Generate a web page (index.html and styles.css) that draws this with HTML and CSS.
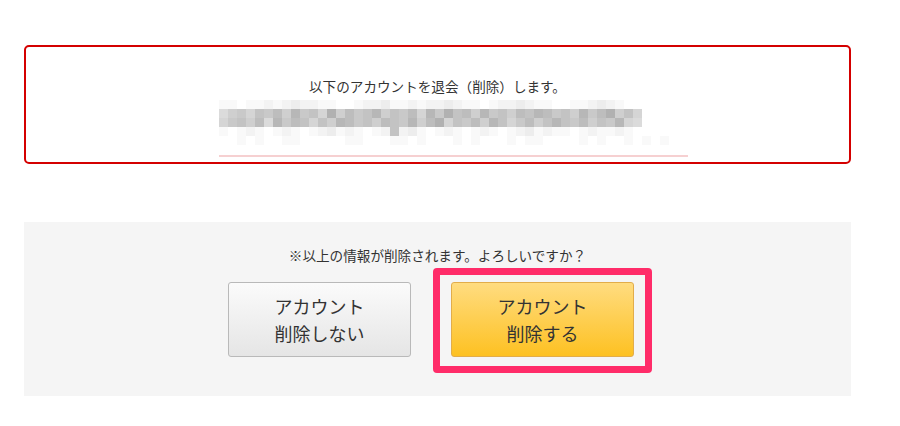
FILE: index.html
```html
<!DOCTYPE html>
<html lang="ja">
<head>
    <meta charset="UTF-8">
    <meta name="viewport" content="width=device-width, initial-scale=1.0">
    <title>退会（削除）の確認</title>
    <link rel="stylesheet" href="styles.css">
</head>
<body>
    <div class="page">
        <!-- Account to be removed -->
        <div class="notice">
            <p class="notice-text">以下のアカウントを退会（削除）します。</p>
            <div class="account">
                <div class="account-mosaic"></div>
                <div class="account-line"></div>
            </div>
        </div>

        <!-- Confirm -->
        <div class="confirm">
            <p class="confirm-text">※以上の情報が削除されます。よろしいですか？</p>
            <div class="confirm-buttons">
                <button class="btn btn-cancel">アカウント<br>削除しない</button>
                <div class="highlight">
                    <button class="btn btn-delete">アカウント<br>削除する</button>
                </div>
            </div>
        </div>
    </div>

    <script src="script.js"></script>
</body>
</html>
```

FILE: styles.css
```css
/* Withdraw page */

body {
    margin: 0;
    background: #fff;
    color: #333;
    font-family: "Noto Sans CJK JP", "Noto Sans", sans-serif;
}

.page {
    width: 827px;
    margin-left: 24px;
    padding-top: 45px;
}

/* Notice box */
.notice {
    border: 2px solid #d40000;
    border-radius: 5px;
    padding: 29px 0 5px;
    text-align: center;
}

.notice-text {
    margin: 0;
    font-size: 13.6px;
    line-height: 20px;
}

.account {
    width: 469px;
    margin: 4px 0 0 193px;
}

.account-mosaic {
    display: grid;
    grid-template-columns: repeat(52, 9px);
    grid-auto-rows: 9px;
}

.mosaic-cell {
    width: 9px;
    height: 9px;
}

.account-line {
    height: 2px;
    margin-top: 10px;
    background: #f6d0d1;
}

/* Confirm panel */
.confirm {
    margin-top: 58px;
    background: #f5f5f5;
    padding: 23px 0 39px;
    text-align: center;
}

.confirm-text {
    margin: 0;
    font-size: 13.6px;
    line-height: 20px;
}

.confirm-buttons {
    display: flex;
    justify-content: center;
    gap: 40px;
    margin-top: 17px;
    padding-right: 13px;
}

.btn {
    width: 183px;
    height: 75px;
    padding: 0;
    border-radius: 3px;
    font-family: inherit;
    font-size: 18px;
    line-height: 27px;
    color: #333;
    cursor: pointer;
}

.btn-cancel {
    border: 1px solid #b9b9b9;
    background: linear-gradient(#fbfbfb, #e5e5e5);
}

.btn-delete {
    border: 1px solid #e2ad4a;
    background: linear-gradient(#ffdc80, #fdc122);
}

/* Annotation frame round the delete button */
.highlight {
    position: relative;
}

.highlight::after {
    content: "";
    position: absolute;
    top: -14px;
    bottom: -16px;
    left: -18px;
    right: -18px;
    border: 7px solid #ff2c69;
    border-radius: 4px;
    pointer-events: none;
}
```

FILE: script.js
```js
// Build the pixelated (hidden) address
const rows = [
    '1101121232211001223112122321101223211001123210000000',
    '6897a9b8c9a7d8b9ac8a9b7c9dab8c9a8bacb9a8c9bd8a70000',
    '79a8b6c9ba7a8cb9a8ba9c8bd7a9b8ca79b8aca9b8a9c7600000',
    '1012101210123121012a2310121012101231211012112100000',
    '0010100110000011000110100010100010110000101001010100'
];

const mosaic = document.querySelector('.account-mosaic');

rows.forEach(row => {
    for (let i = 0; i < 52; i++) {
        const level = parseInt(row[i] || '0', 16);
        const shade = 255 - level * 6;
        const cell = document.createElement('div');
        cell.className = 'mosaic-cell';
        cell.style.background = `rgb(${shade}, ${shade}, ${shade})`;
        mosaic.appendChild(cell);
    }
});
```
